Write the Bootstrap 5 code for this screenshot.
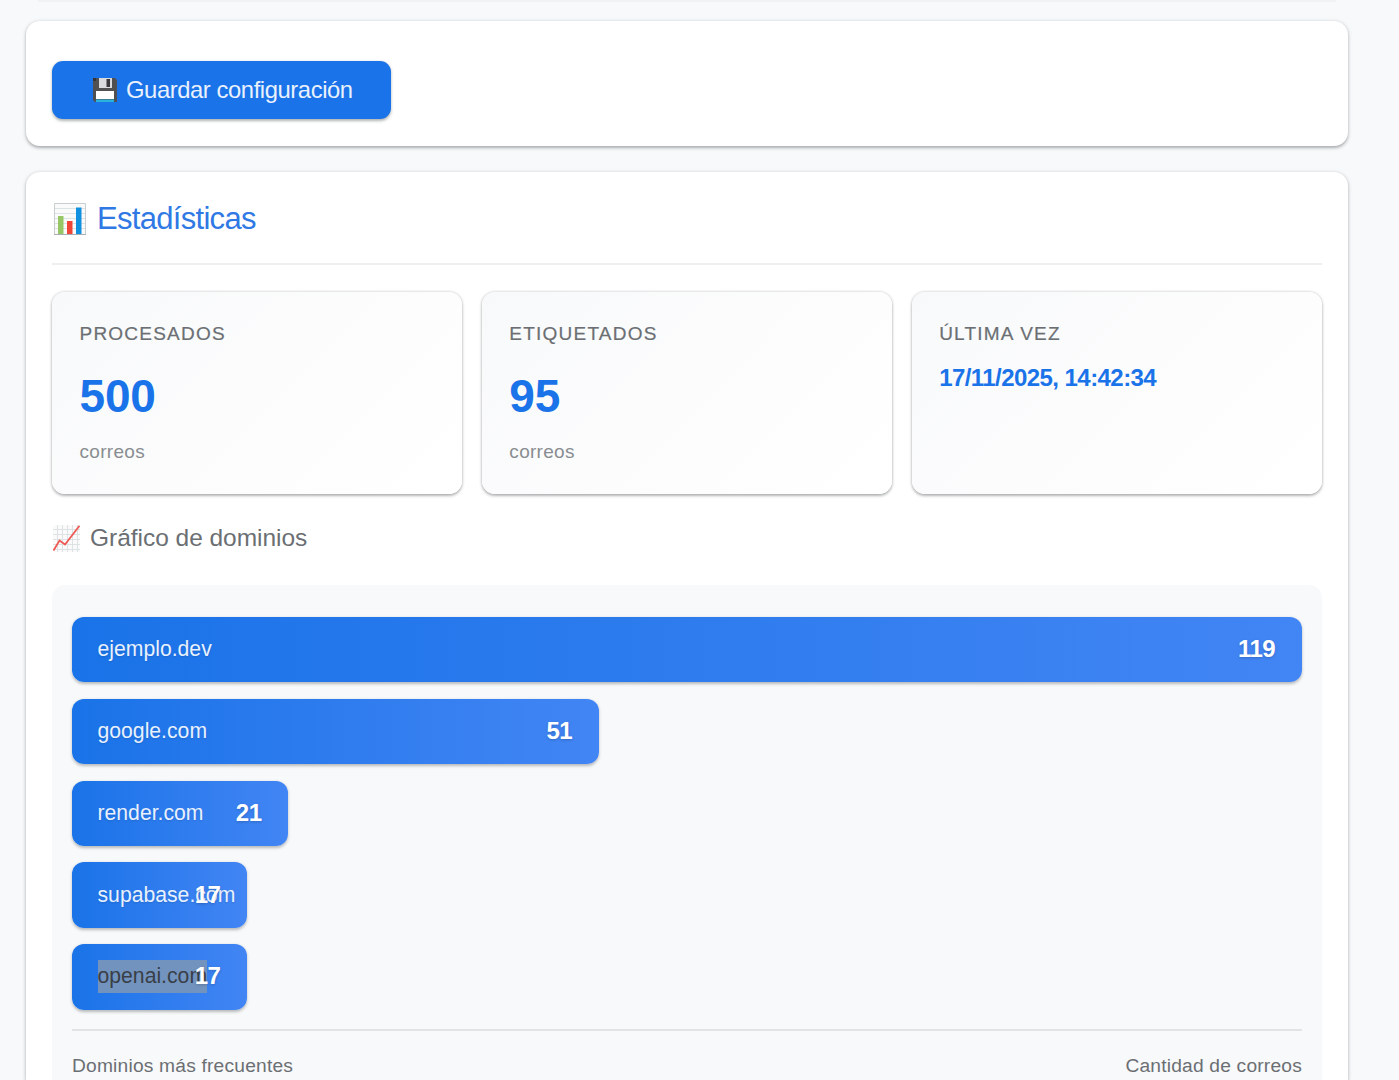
<!DOCTYPE html>
<html lang="es">
<head>
<meta charset="utf-8">
<meta name="viewport" content="width=device-width, initial-scale=1">
<title>Estadísticas</title>
<link href="https://cdn.jsdelivr.net/npm/bootstrap@5.3.0/dist/css/bootstrap.min.css" rel="stylesheet">
<style>
html,body{height:100%;overflow:hidden}
body{background:#f8f9fb;font-family:"Liberation Sans",Arial,sans-serif;color:#5f6368}
.panel-list{height:100vh;padding:21px 51px 0 26px;overflow:hidden}
.prev-edge{height:2px;margin:-21px 12px 19px;background:#f1f2f4}
.panel{border:0;border-radius:14px;background:#fff;box-shadow:0 1.6px 3px rgba(60,64,67,.34),0 1px 5px rgba(60,64,67,.12)}
.panel-save{flex:none;height:125px;padding:39.500px 26px 0;margin-bottom:25.5px}
.btn-save{width:339px;height:58.5px;border:0;border-radius:11px;background:#1a73e8;color:#e9f1fd;font-size:23.8px;letter-spacing:-.42px;line-height:1;padding:0 0 0 40px;box-shadow:0 1.6px 3px rgba(60,64,67,.4)}
.btn-save svg{width:26px;height:26px;margin-right:8px}
.panel-stats{flex:1 1 0;min-height:0;padding:0 26px;border-radius:14px 14px 0 0}
.head-stats{flex:none;height:93.5px;border-bottom:2.5px solid #eeeff0;margin-bottom:27px;padding-top:2px}
.head-stats h2{font-size:31px;letter-spacing:-.7px;line-height:1;color:#3079e4;font-weight:400}
.head-stats svg{width:34px;height:34px;margin:1px 10px 0 1px}
.stats{flex:none;gap:19.5px;height:202px}
.stat{flex:1 1 0;border:0;border-radius:13px;padding:32px 27px 0 27.5px;background:linear-gradient(135deg,#f8f9fa,#fff);box-shadow:0 1.6px 3px rgba(60,64,67,.36),0 0 3px rgba(60,64,67,.2)}
.stat-label{font-size:19px;line-height:20px;letter-spacing:1.22px;color:#6b6f73;-webkit-text-stroke:.2px #6b6f73}
.stat-num{font-size:46px;line-height:46px;letter-spacing:-.2px;font-weight:700;color:#1a73e8;margin-top:28.5px}
.stat-unit{font-size:19px;line-height:20px;letter-spacing:.3px;color:#898d91;margin-top:23.5px}
.stat-date{font-size:24px;line-height:24px;font-weight:700;color:#1a73e8;margin-top:22px;letter-spacing:-.56px}
.sub{flex:none;height:91px;padding-bottom:2px}
.sub h3{font-size:24.5px;line-height:1;font-weight:400;color:#6b6f73}
.sub svg{width:29px;height:29px;margin-right:9px}
.sub span{letter-spacing:-.03px}
.chart{flex:1 1 0;min-height:0;border-radius:13px 13px 0 0;background:#f8f9fa;padding:32px 20px 0}
.bars{gap:16.4px}
.bar{height:65.4px;border-radius:12px;background:linear-gradient(90deg,#1a73e8,#4285f4);box-shadow:0 1.6px 3px rgba(60,64,67,.34)}
.bar-name{padding:0 0 1px 25.5px;font-size:21.2px;line-height:32px;color:#e8f1fd;text-shadow:0 1px 2px rgba(0,0,0,.12);white-space:nowrap}
.bar-num{position:absolute;right:27px;padding-bottom:1px;font-size:24px;letter-spacing:-.55px;line-height:32px;font-weight:700;color:#fff;text-shadow:0 1px 3px rgba(0,0,0,.2)}
.picked{display:inline-block;height:32.5px;background:#7393bf;color:#393f47;text-shadow:none}
.chart-foot{border-top:2px solid #e1e3e5;margin-top:19.5px;padding-top:24.500px;font-size:19.2px;letter-spacing:.2px;line-height:20px;color:#6b6f73}
</style>
</head>
<body>
<main class="panel-list d-flex flex-column">
  <div class="prev-edge flex-shrink-0"></div>
  <section class="panel panel-save">
    <button class="btn btn-save d-flex align-items-center" type="button">
      <svg viewBox="0 0 26 26" aria-hidden="true"><path d="M1 1h22l2 2v22H3l-2-2z" fill="#504f51"/><path d="M7 1h13v10H7z" fill="#d9dade"/><path d="M14.500 2h3.500v8h-3.500z" fill="#3a383c"/><path d="M4 14h18v8H4z" fill="#fff"/><path d="M4 22.500h18v2.500H4z" fill="#29b3dc"/><path d="M1 1h3v3H1z" fill="#353336"/></svg>
      <span>Guardar configuración</span>
    </button>
  </section>
  <section class="panel panel-stats d-flex flex-column">
    <header class="head-stats d-flex align-items-center">
      <h2 class="d-flex align-items-center mb-0">
        <svg viewBox="0 0 34 34" aria-hidden="true"><path d="M1 1h32v32H1z" fill="#fafafa"/><path d="M1 6.500h32M1 11.500h32M1 16.500h32M1 21.500h32M1 26.500h32" stroke="#dce3e5"/><path d="M1.500 1.500h31v31h-31z" fill="none" stroke="#c9cfd1"/><path d="M5 14h5.500v18H5z" fill="#97c667"/><path d="M14 19h5.500v13H14z" fill="#f04438"/><path d="M23 5.500h5.500V32H23z" fill="#1091df"/><path d="M1 32.500h32" stroke="#a9afb1"/></svg>
        <span>Estadísticas</span>
      </h2>
    </header>
    <div class="stats d-flex">
      <div class="stat">
        <div class="stat-label">PROCESADOS</div>
        <div class="stat-num">500</div>
        <div class="stat-unit">correos</div>
      </div>
      <div class="stat">
        <div class="stat-label">ETIQUETADOS</div>
        <div class="stat-num">95</div>
        <div class="stat-unit">correos</div>
      </div>
      <div class="stat">
        <div class="stat-label">ÚLTIMA VEZ</div>
        <div class="stat-date">17/11/2025, 14:42:34</div>
      </div>
    </div>
    <div class="sub d-flex align-items-center">
      <h3 class="d-flex align-items-center mb-0">
        <svg viewBox="0 0 29 29" aria-hidden="true"><path d="M1 1h27v27H1z" fill="#fafafa"/><path d="M5.500 1v27M10.500 1v27M15.500 1v27M20.500 1v27M25.500 1v27M1 5.500h27M1 10.500h27M1 15.500h27M1 20.500h27M1 25.500h27" stroke="#dde2e4"/><path d="M1.500 26.500L7.500 16.500L13 20.500L27.500 1.800" fill="none" stroke="#ef5a54" stroke-width="1.800"/></svg>
        <span>Gráfico de dominios</span>
      </h3>
    </div>
    <div class="chart">
      <div class="bars d-flex flex-column">
        <div class="bar position-relative d-flex align-items-center" style="width:100%"><span class="bar-name">ejemplo.dev</span><span class="bar-num">119</span></div>
        <div class="bar position-relative d-flex align-items-center" style="width:42.86%"><span class="bar-name">google.com</span><span class="bar-num">51</span></div>
        <div class="bar position-relative d-flex align-items-center" style="width:17.6%"><span class="bar-name">render.com</span><span class="bar-num">21</span></div>
        <div class="bar position-relative d-flex align-items-center" style="width:14.25%"><span class="bar-name">supabase.com</span><span class="bar-num">17</span></div>
        <div class="bar position-relative d-flex align-items-center" style="width:14.25%"><span class="bar-name"><span class="picked">openai.com</span></span><span class="bar-num">17</span></div>
      </div>
      <div class="chart-foot d-flex justify-content-between"><span>Dominios más frecuentes</span><span>Cantidad de correos</span></div>
    </div>
  </section>
</main>
<script src="https://cdn.jsdelivr.net/npm/bootstrap@5.3.0/dist/js/bootstrap.bundle.min.js"></script>
</body>
</html>
